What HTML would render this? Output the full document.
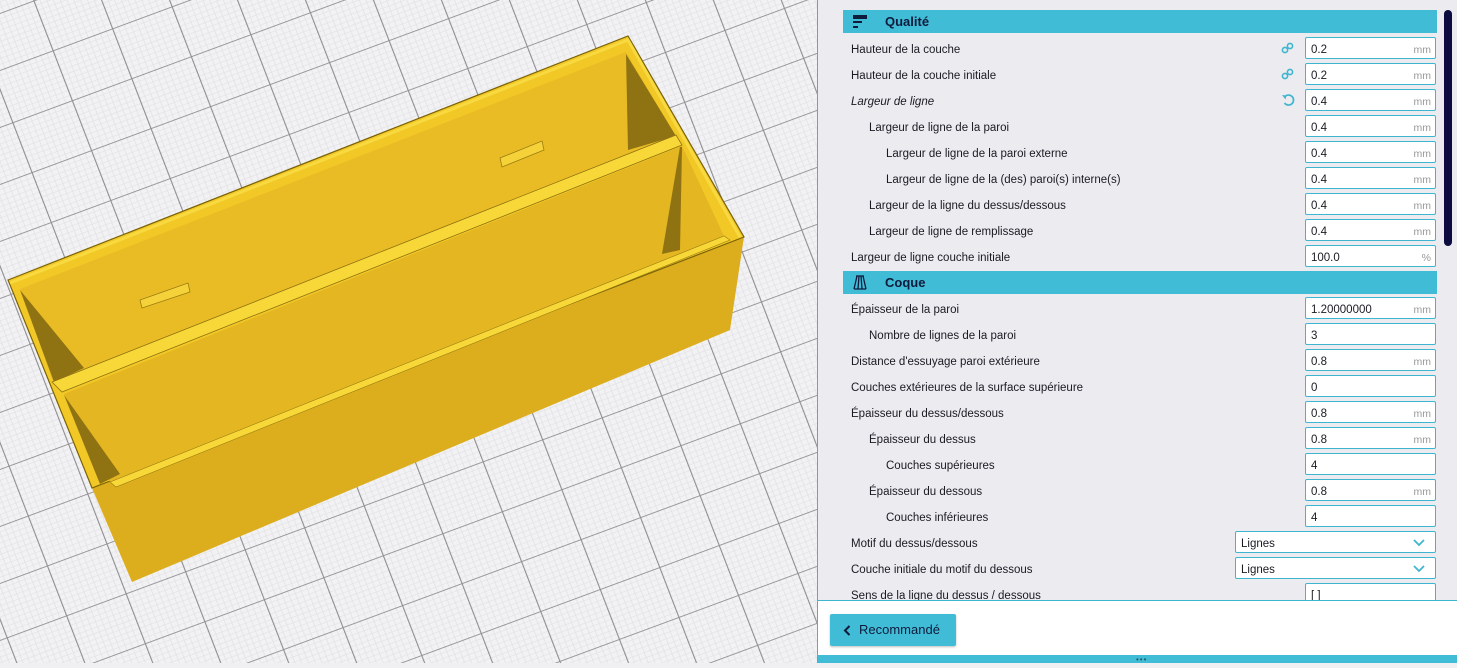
<!DOCTYPE html>
<html><head><meta charset="utf-8">
<style>
*{margin:0;padding:0;box-sizing:border-box}
body{width:1457px;height:663px;overflow:hidden;position:relative;background:#f0f0f2;font-family:"Liberation Sans","DejaVu Sans",sans-serif;}
#view{position:absolute;left:0;top:0;width:818px;height:663px}
#panel{position:absolute;left:817px;top:0;width:640px;height:663px;background:#ebebf0;border-left:1px solid #3fb6cf}
#scroll{position:absolute;left:0;top:0;width:640px;height:600px;overflow:hidden}
.hdr{position:absolute;left:25px;width:594px;height:23px;background:#41bcd6;color:#0e1b3c;font-weight:bold;font-size:13px;line-height:24px;padding-left:42px}
.row{position:absolute;left:33px;font-size:11.5px;color:#1a1a22;height:26px;line-height:30px}
.inp{position:absolute;left:487px;width:131px;height:22px;background:#fff;border:1px solid #3fb6cf;border-radius:2px;font-size:11.5px;line-height:24px;padding-left:5px;color:#1a1a22}
.inp span{position:absolute;right:4px;top:0;color:#999;font-size:10.5px}
.dd{left:417px;width:201px}
.dd svg{position:absolute;right:10px;top:7px}
.ic{position:absolute;left:463px}
#sb{position:absolute;left:626px;top:10px;width:8px;height:236px;background:#0c0c40;border-radius:4px}
#bottom{position:absolute;left:0;top:600px;width:640px;height:55px;background:#fff;border-top:1px solid #3fb6cf}
#btn{position:absolute;left:12px;top:13px;width:126px;height:32px;background:#41bcd6;border-radius:2px;color:#0e1b3c;font-size:13px;line-height:32px;padding-left:29px;box-shadow:0 1px 2px rgba(0,0,0,.25)}
#bar{position:absolute;left:0;top:655px;width:640px;height:8px;background:#41bcd6}
</style></head><body>
<div id="view">
<svg width="818" height="663" viewBox="0 0 818 663">
<defs>
<pattern id="g" patternUnits="userSpaceOnUse" width="100" height="100" patternTransform="matrix(0.595,-0.22,0.192,0.499,33.3,0.7)">
<rect width="100" height="100" fill="#f2f2f4"/>
<g stroke="#e2e2e6" stroke-width="1.2">
<path d="M10 0V100M20 0V100M30 0V100M40 0V100M50 0V100M60 0V100M70 0V100M80 0V100M90 0V100M0 10H100M0 20H100M0 30H100M0 40H100M0 50H100M0 60H100M0 70H100M0 80H100M0 90H100"/>
</g>
<path d="M0 0V100M0 0H100" stroke="#8e8e92" stroke-width="3.5" fill="none"/>
</pattern>
</defs>
<rect width="818" height="663" fill="url(#g)"/>
<polygon points="92,488 744,237 730,330 132,582" fill="#dcae1e"/>
<polygon points="8,280 628,36 744,237 92,488" fill="#f2c826" stroke="#7a6208" stroke-width="1.2"/>
<polygon points="20,289 626,52 676,137 54,384" fill="#e9bc25"/>
<polygon points="626,54 676,136 628,150" fill="#8f7212"/>
<polygon points="20,290 84,368 54,382" fill="#8f7212"/>
<polygon points="140,300 188,283 190,292 142,308" fill="#f6d23a" stroke="#9a7d10" stroke-width=".8"/>
<polygon points="500,158 542,141 544,150 502,167" fill="#f6d23a" stroke="#9a7d10" stroke-width=".8"/>
<polygon points="52,382 676,135 682,145 62,392" fill="#f8d838" stroke="#8f7212" stroke-width=".8"/>
<polygon points="64,394 682,146 724,236 110,482" fill="#e4b622"/>
<polygon points="682,147 680,250 662,254 680,147" fill="#8f7212"/>
<polygon points="64,395 120,474 100,484" fill="#8f7212"/>
<polyline points="10,283 628,40 740,237" fill="none" stroke="#f8da40" stroke-width="3"/>
<polygon points="110,482 724,236 730,240 116,487" fill="#f8d838" stroke="#9a7d10" stroke-width=".6"/>
</svg>
</div>
<div id="panel">
<div id="scroll">
<div class="hdr" style="top:10px">
<svg style="position:absolute;left:10px;top:5px" width="14" height="14" viewBox="0 0 14 14"><rect x="0" y="0" width="14" height="4" fill="#0e1b3c"/><rect x="0" y="6" width="9" height="2" fill="#0e1b3c"/><rect x="0" y="11" width="5" height="2" fill="#0e1b3c"/></svg>Qualité</div>

<div class="row" style="top:35px">Hauteur de la couche</div>
<svg class="ic" style="top:42px" width="14" height="12" viewBox="0 0 14 12"><circle cx="4" cy="8" r="2.6" fill="none" stroke="#3fb6cf" stroke-width="1.6"/><circle cx="9" cy="4" r="2.6" fill="none" stroke="#3fb6cf" stroke-width="1.6"/></svg>
<div class="inp" style="top:37px">0.2<span>mm</span></div>

<div class="row" style="top:61px">Hauteur de la couche initiale</div>
<svg class="ic" style="top:68px" width="14" height="12" viewBox="0 0 14 12"><circle cx="4" cy="8" r="2.6" fill="none" stroke="#3fb6cf" stroke-width="1.6"/><circle cx="9" cy="4" r="2.6" fill="none" stroke="#3fb6cf" stroke-width="1.6"/></svg>
<div class="inp" style="top:63px">0.2<span>mm</span></div>

<div class="row" style="top:87px;font-style:italic">Largeur de ligne</div>
<svg class="ic" style="top:93px" width="14" height="14" viewBox="0 0 14 14"><path d="M4 3.5A5 5 0 1 1 3.5 10" fill="none" stroke="#3fb6cf" stroke-width="1.7"/><path d="M1 2L5.5 2.5L4.5 6.5Z" fill="#3fb6cf"/></svg>
<div class="inp" style="top:89px">0.4<span>mm</span></div>

<div class="row" style="top:113px;left:51px">Largeur de ligne de la paroi</div>
<div class="inp" style="top:115px">0.4<span>mm</span></div>
<div class="row" style="top:139px;left:68px">Largeur de ligne de la paroi externe</div>
<div class="inp" style="top:141px">0.4<span>mm</span></div>
<div class="row" style="top:165px;left:68px">Largeur de ligne de la (des) paroi(s) interne(s)</div>
<div class="inp" style="top:167px">0.4<span>mm</span></div>
<div class="row" style="top:191px;left:51px">Largeur de la ligne du dessus/dessous</div>
<div class="inp" style="top:193px">0.4<span>mm</span></div>
<div class="row" style="top:217px;left:51px">Largeur de ligne de remplissage</div>
<div class="inp" style="top:219px">0.4<span>mm</span></div>
<div class="row" style="top:243px">Largeur de ligne couche initiale</div>
<div class="inp" style="top:245px">100.0<span>%</span></div>

<div class="hdr" style="top:271px">
<svg style="position:absolute;left:10px;top:4px" width="14" height="15" viewBox="0 0 14 15"><path d="M3 1H11M4 1L1 14M10 1L13 14M1 14H13M6 1L5 14M8 1L9 14" fill="none" stroke="#0e1b3c" stroke-width="1.3"/></svg>Coque</div>

<div class="row" style="top:295px">Épaisseur de la paroi</div>
<div class="inp" style="top:297px">1.20000000<span>mm</span></div>
<div class="row" style="top:321px;left:51px">Nombre de lignes de la paroi</div>
<div class="inp" style="top:323px">3</div>
<div class="row" style="top:347px">Distance d'essuyage paroi extérieure</div>
<div class="inp" style="top:349px">0.8<span>mm</span></div>
<div class="row" style="top:373px">Couches extérieures de la surface supérieure</div>
<div class="inp" style="top:375px">0</div>
<div class="row" style="top:399px">Épaisseur du dessus/dessous</div>
<div class="inp" style="top:401px">0.8<span>mm</span></div>
<div class="row" style="top:425px;left:51px">Épaisseur du dessus</div>
<div class="inp" style="top:427px">0.8<span>mm</span></div>
<div class="row" style="top:451px;left:68px">Couches supérieures</div>
<div class="inp" style="top:453px">4</div>
<div class="row" style="top:477px;left:51px">Épaisseur du dessous</div>
<div class="inp" style="top:479px">0.8<span>mm</span></div>
<div class="row" style="top:503px;left:68px">Couches inférieures</div>
<div class="inp" style="top:505px">4</div>
<div class="row" style="top:529px">Motif du dessus/dessous</div>
<div class="inp dd" style="top:531px">Lignes<svg width="12" height="8" viewBox="0 0 12 8"><path d="M1 1L6 6L11 1" fill="none" stroke="#3fb6cf" stroke-width="1.8"/></svg></div>
<div class="row" style="top:555px">Couche initiale du motif du dessous</div>
<div class="inp dd" style="top:557px">Lignes<svg width="12" height="8" viewBox="0 0 12 8"><path d="M1 1L6 6L11 1" fill="none" stroke="#3fb6cf" stroke-width="1.8"/></svg></div>
<div class="row" style="top:581px">Sens de la ligne du dessus / dessous</div>
<div class="inp" style="top:583px">[ ]</div>
<div id="sb"></div>
</div>
<div id="bottom"><div id="btn"><svg style="position:absolute;left:13px;top:11px" width="8" height="11" viewBox="0 0 8 11"><path d="M6.5 1L2 5.5L6.5 10" fill="none" stroke="#0e1b3c" stroke-width="2"/></svg>Recommandé</div></div>
<div id="bar"><div style="position:absolute;left:318px;top:2px;font-size:8px;color:#1f5e6e;line-height:6px;letter-spacing:1px">•••</div></div>
</div>
</body></html>
